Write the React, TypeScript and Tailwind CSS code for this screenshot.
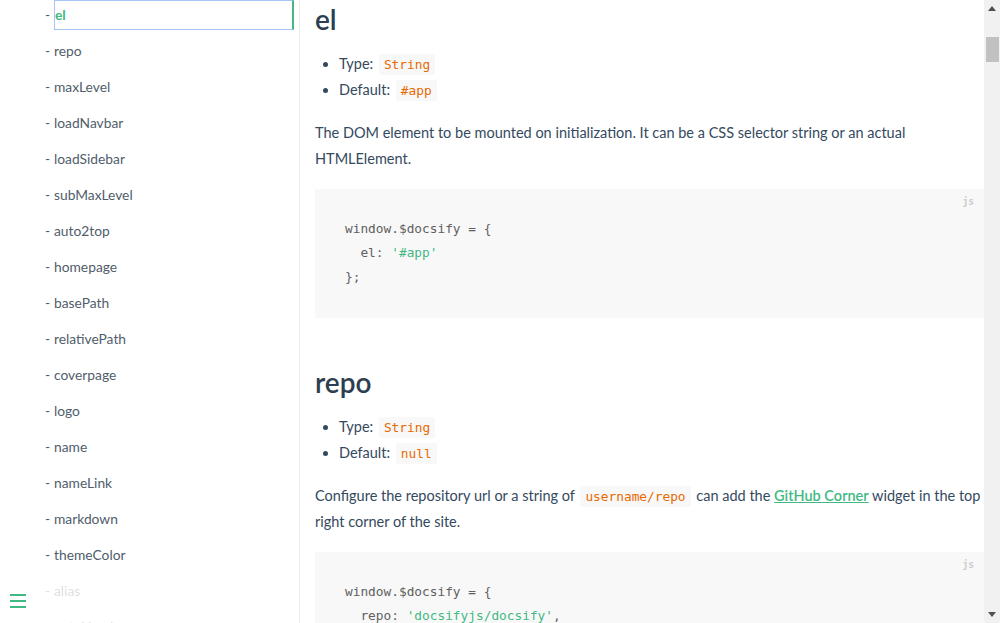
import React from 'react';

const sidebarItems = [
  'el', 'repo', 'maxLevel', 'loadNavbar', 'loadSidebar', 'subMaxLevel', 'auto2top',
  'homepage', 'basePath', 'relativePath', 'coverpage', 'logo', 'name', 'nameLink',
  'markdown', 'themeColor', 'alias', 'autoHeader',
];

const body = { fontFamily: 'Lato, "Noto Sans", sans-serif' };
const mono = { fontFamily: '"DejaVu Sans Mono", "Liberation Mono", monospace' };

const Code = ({ children }: { children: React.ReactNode }) => (
  <code
    className="mx-[2px] rounded-[2px] bg-[#f8f8f8] px-[5px] py-[3px] align-baseline text-[12.8px] leading-[14px] text-[#e96900]"
    style={mono}
  >
    {children}
  </code>
);

const Str = ({ children }: { children: React.ReactNode }) => (
  <span className="text-[#42b983]">{children}</span>
);

const CodeBlock = ({ lines }: { lines: React.ReactNode[] }) => (
  <pre className="relative mt-[18px] bg-[#f8f8f8] px-[30px] pt-[28px] pb-[29px]" style={mono}>
    <span className="absolute right-0 top-0 px-[10px] pt-[5px] text-[9.6px] font-semibold leading-[15px] text-[#ccc]">
      js
    </span>
    {lines.map((l, i) => (
      <div key={i} className="h-[24px] text-[12.8px] leading-[24px] text-[#606060]">
        {l}
      </div>
    ))}
  </pre>
);

const Props = ({ type, def }: { type: string; def: string }) => (
  <ul className="mt-[13px] list-disc pl-[24px] text-[14.5px] marker:text-[#34495e]">
    <li className="h-[26px] leading-[26px]">
      Type: <Code>{type}</Code>
    </li>
    <li className="h-[26px] leading-[26px]">
      Default: <Code>{def}</Code>
    </li>
  </ul>
);

export default function App() {
  return (
    <div className="relative flex h-[623px] w-[1000px] overflow-hidden bg-white" style={body}>
      {/* sidebar */}
      <aside className="w-[300px] shrink-0 border-r border-[#ededed]">
        <ul className="flex flex-col gap-[6px] pl-[45px] pr-[5px]">
          {sidebarItems.map((name, i) => (
            <li key={name} className="flex h-[30px] items-center text-[13.8px] leading-[30px] text-[#505d6b]">
              <span className="w-[9px] shrink-0">-</span>
              {i === 0 ? (
                <a className="flex h-[30px] flex-1 items-center border border-r-2 border-[#a4c6f8] border-r-[#42b983] font-bold text-[#42b983]">
                  el
                </a>
              ) : (
                <a>{name}</a>
              )}
            </li>
          ))}
        </ul>
      </aside>

      {/* content */}
      <main className="min-w-0 flex-1 pl-[15px] text-[#34495e]">
        <h2 className="text-[28px] font-semibold leading-[38px] text-[#2c3e50]">el</h2>
        <Props type="String" def="#app" />
        <p className="mt-[17px] text-[14.5px] leading-[25.6px]">
          The DOM element to be mounted on initialization. It can be a CSS selector string or an actual
          HTMLElement.
        </p>
        <CodeBlock
          lines={[
            'window.$docsify = {',
            <>
              {'  el: '}
              <Str>'#app'</Str>
            </>,
            '};',
          ]}
        />

        <h2 className="mt-[45px] text-[28px] font-semibold leading-[38px] text-[#2c3e50]">repo</h2>
        <Props type="String" def="null" />
        <p className="mt-[17px] text-[14.5px] leading-[25.6px]">
          Configure the repository url or a string of <Code>username/repo</Code> can add the{' '}
          <a className="font-semibold text-[#42b983] underline">GitHub Corner</a> widget in the top right
          corner of the site.
        </p>
        <CodeBlock
          lines={[
            'window.$docsify = {',
            <>
              {'  repo: '}
              <Str>'docsifyjs/docsify'</Str>,
            </>,
            '};',
          ]}
        />
      </main>

      {/* scrollbar */}
      <div className="flex w-[16px] shrink-0 flex-col items-center bg-[#f1f1f1]">
        <div className="flex h-[17px] w-full items-center justify-center">
          <svg width="8" height="5" viewBox="0 0 8 5">
            <path d="M0 5 L4 0 L8 5 Z" fill="#505050" />
          </svg>
        </div>
        <div className="mt-[20px] h-[25px] w-[13px] bg-[#c1c1c1]" />
        <div className="flex-1" />
        <div className="flex h-[17px] w-full items-center justify-center">
          <svg width="8" height="5" viewBox="0 0 8 5">
            <path d="M0 0 L4 5 L8 0 Z" fill="#505050" />
          </svg>
        </div>
      </div>

      {/* sidebar toggle */}
      <div className="absolute bottom-0 left-0 h-[50px] w-[284px] bg-white/80">
        <button className="absolute left-[10px] top-[21px] flex flex-col gap-[4px]">
          <span className="block h-[2px] w-[16px] bg-[#42b983]" />
          <span className="block h-[2px] w-[16px] bg-[#42b983]" />
          <span className="block h-[2px] w-[16px] bg-[#42b983]" />
        </button>
      </div>
    </div>
  );
}
